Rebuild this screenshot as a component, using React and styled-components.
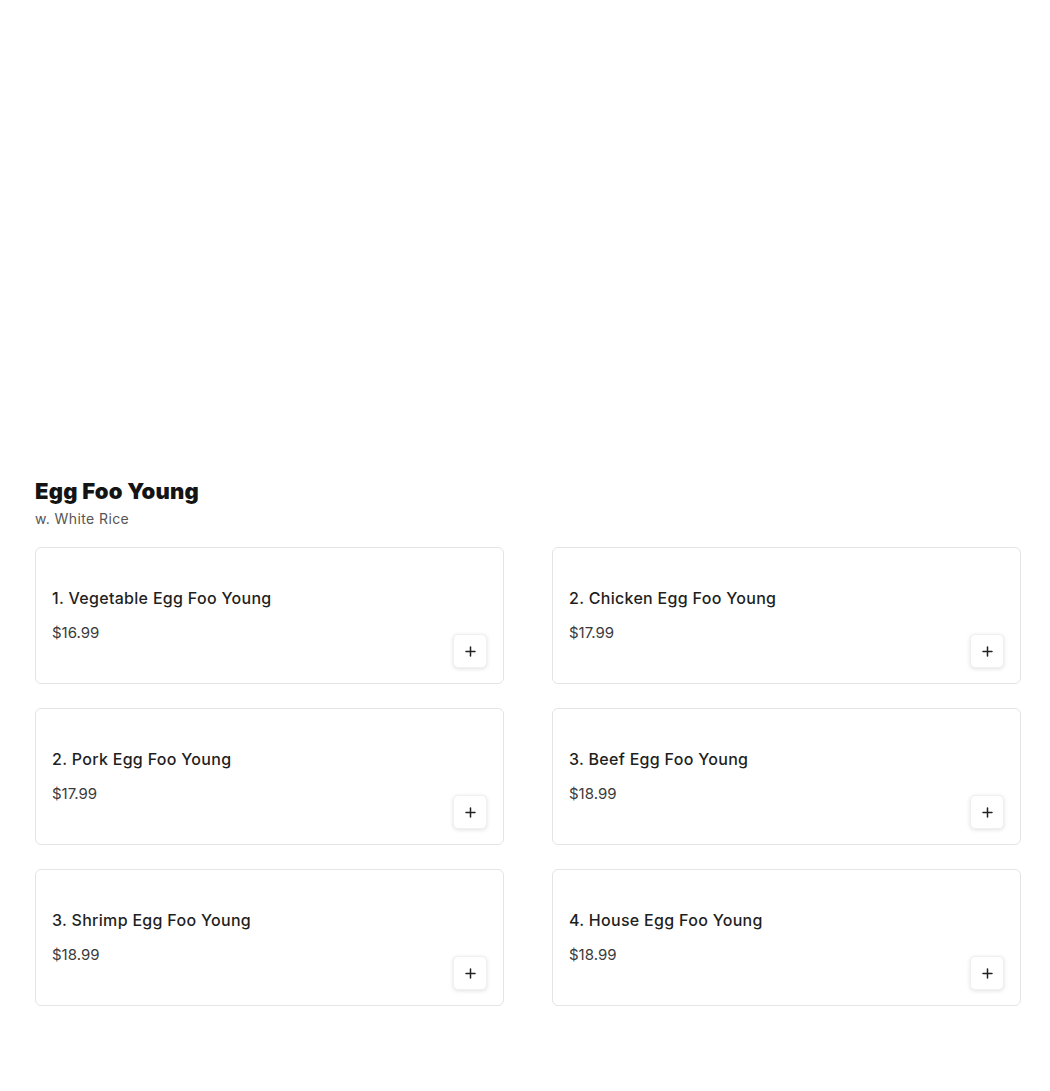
import styled, { createGlobalStyle } from 'styled-components'

const GlobalStyle = createGlobalStyle`
  body {
    margin: 0;
    background: #ffffff;
    font-family: 'Inter', 'Noto Sans', sans-serif;
    color: #1a1a1a;
  }
`

const items = [
  { name: '1. Vegetable Egg Foo Young', price: '$16.99' },
  { name: '2. Chicken Egg Foo Young', price: '$17.99' },
  { name: '2. Pork Egg Foo Young', price: '$17.99' },
  { name: '3. Beef Egg Foo Young', price: '$18.99' },
  { name: '3. Shrimp Egg Foo Young', price: '$18.99' },
  { name: '4. House Egg Foo Young', price: '$18.99' },
]

const Page = styled.main`
  padding: 477px 29px 85px 35px;
`

const Section = styled.section`
  width: 986px;
`

const Heading = styled.h2`
  margin: 0;
  font-size: 22px;
  line-height: 28px;
  font-weight: 900;
  letter-spacing: 0.2px;
  color: #141414;
`

const Subtitle = styled.p`
  margin: 4px 0 0;
  font-size: 14px;
  line-height: 20px;
  letter-spacing: 0.4px;
  color: #555555;
`

const Grid = styled.div`
  margin-top: 18px;
  display: grid;
  grid-template-columns: 1fr 1fr;
  column-gap: 48px;
  row-gap: 24px;
`

const Card = styled.article`
  box-sizing: border-box;
  min-height: 137px;
  padding: 16px 16px 15px;
  border: 1px solid #e4e4e4;
  border-radius: 6px;
  display: flex;
  justify-content: space-between;
  align-items: flex-end;
`

const Info = styled.div`
  align-self: flex-start;
  padding-top: 22px;
`

const Name = styled.h3`
  margin: 0;
  font-size: 16px;
  line-height: 24px;
  font-weight: 500;
  letter-spacing: 0.3px;
  color: #1f1f1f;
`

const Price = styled.div`
  margin-top: 11px;
  font-size: 15px;
  line-height: 24px;
  color: #3a3a3a;
`

const AddButton = styled.button`
  width: 34px;
  height: 34px;
  padding: 0;
  border: 1px solid #f0f0f0;
  border-radius: 5px;
  background: #ffffff;
  box-shadow: 0 1px 4px rgba(0, 0, 0, 0.12);
  display: flex;
  align-items: center;
  justify-content: center;
  color: #222;
  cursor: pointer;
`

const PlusIcon = () => (
  <svg width="11" height="11" viewBox="0 0 11 11" fill="none">
    <path d="M5.5 1v9M1 5.5h9" stroke="currentColor" strokeWidth="1.5" strokeLinecap="round" />
  </svg>
)

export default function App() {
  return (
    <>
      <GlobalStyle />
      <Page>
        <Section>
          <Heading>Egg Foo Young</Heading>
          <Subtitle>w. White Rice</Subtitle>
          <Grid>
            {items.map((item) => (
              <Card key={item.name}>
                <Info>
                  <Name>{item.name}</Name>
                  <Price>{item.price}</Price>
                </Info>
                <AddButton aria-label={`Add ${item.name}`}>
                  <PlusIcon />
                </AddButton>
              </Card>
            ))}
          </Grid>
        </Section>
      </Page>
    </>
  )
}
